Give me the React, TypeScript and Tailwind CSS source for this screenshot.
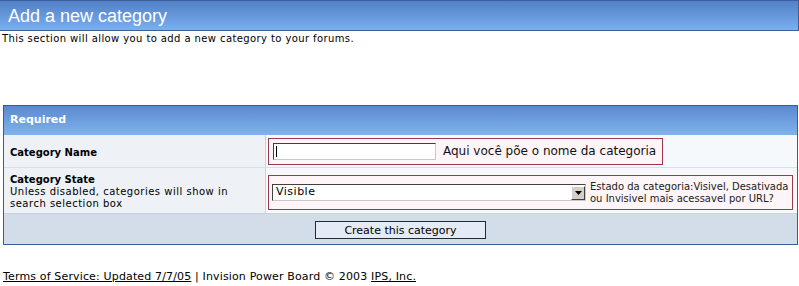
const font = "font-['DejaVu_Sans',Verdana,sans-serif]"

function RedBox({ children, className = "" }: { children: React.ReactNode; className?: string }) {
  return (
    <div className={`flex items-center border border-[#9b3a48] bg-[#fdf5f7] ${className}`}>{children}</div>
  )
}

export default function App() {
  return (
    <div className={`h-[286px] w-[799px] overflow-hidden bg-white text-black ${font}`}>
      <div className="flex h-[31px] items-center border-y border-r border-[#3d5f9c] bg-gradient-to-b from-[#5380c6] to-[#78b0f0] px-[8px]">
        <h1 className="text-[18px] leading-none text-white font-['Liberation_Sans',Arial,sans-serif]">
          Add a new category
        </h1>
      </div>
      <p className="mt-[2px] pl-[2px] text-[10px] leading-[12px] tracking-[0.4px]">
        This section will allow you to add a new category to your forums.
      </p>

      <div className="ml-[3px] mt-[60px] w-[795px] border border-[#3b5b91]">
        <div className="flex h-[29px] items-center bg-gradient-to-b from-[#5b89cf] to-[#80b3ec] px-[6px] text-[11px] font-bold text-white">
          Required
        </div>

        <div className="flex h-[33px] border-b border-[#d6dfea]">
          <div className="flex w-[262px] items-center border-r border-[#c6d2e1] bg-[#eef2f7] px-[6px] pt-[3px] text-[10px] font-bold">
            Category Name
          </div>
          <div className="flex flex-1 items-center bg-[#f6f9fc] pl-[2px]">
            <RedBox className="h-[27px] w-[395px] pl-[4px]">
              <div className="flex h-[17px] w-[163px] items-center border border-t-[#404040] border-l-[#404040] border-r-[#c8c8c8] border-b-[#c8c8c8] bg-white pl-[2px]">
                <span className="h-[11px] w-px bg-black" />
              </div>
              <span className="ml-[7px] text-[12px] text-[#111]">Aqui você põe o nome da categoria</span>
            </RedBox>
          </div>
        </div>

        <div className="flex h-[45px]">
          <div className="flex w-[262px] flex-col justify-center border-r border-[#c6d2e1] bg-[#eef2f7] px-[6px] pt-[3px] text-[10px] leading-[12px]">
            <span className="font-bold">Category State</span>
            <span className="tracking-[0.5px]">Unless disabled, categories will show in search selection box</span>
          </div>
          <div className="flex flex-1 items-center bg-[#f6f9fc] pl-[2px] pt-[4px]">
            <RedBox className="h-[35px] w-[525px] pl-[3px]">
              <div className="flex h-[17px] w-[314px] shrink-0 items-center border border-t-[#404040] border-l-[#404040] border-r-[#c8c8c8] border-b-[#c8c8c8] bg-white pl-[3px] text-[11px]">
                <span className="flex-1 tracking-[0.5px]">Visible</span>
                <span className="flex h-[14px] w-[14px] items-center justify-center border border-t-white border-l-white border-r-[#404040] border-b-[#404040] bg-[#d4d0c8]">
                  <svg width="7" height="4" viewBox="0 0 7 4"><path d="M0 0h7L3.5 4z" fill="#000" /></svg>
                </span>
              </div>
              <span className="ml-[4px] whitespace-nowrap text-[10px] leading-[12px] text-[#222]">
                Estado da categoria:Visivel, Desativada
                <br />
                ou Invisivel mais acessavel por URL?
              </span>
            </RedBox>
          </div>
        </div>

        <div className="flex h-[31px] items-center justify-center border-t border-[#c6d2e1] bg-[#d3dde9]">
          <button className="mt-[2px] h-[18px] w-[171px] border border-[#1e2a3a] bg-[#e4ebf5] text-[11px] leading-none">
            Create this category
          </button>
        </div>
      </div>

      <p className="mt-[25px] pl-[3px] text-[11px] leading-[13px] tracking-[0.15px]">
        <a className="underline">Terms of Service: Updated 7/7/05</a> | Invision Power Board © 2003{" "}
        <a className="underline">IPS, Inc.</a>
      </p>
    </div>
  )
}
